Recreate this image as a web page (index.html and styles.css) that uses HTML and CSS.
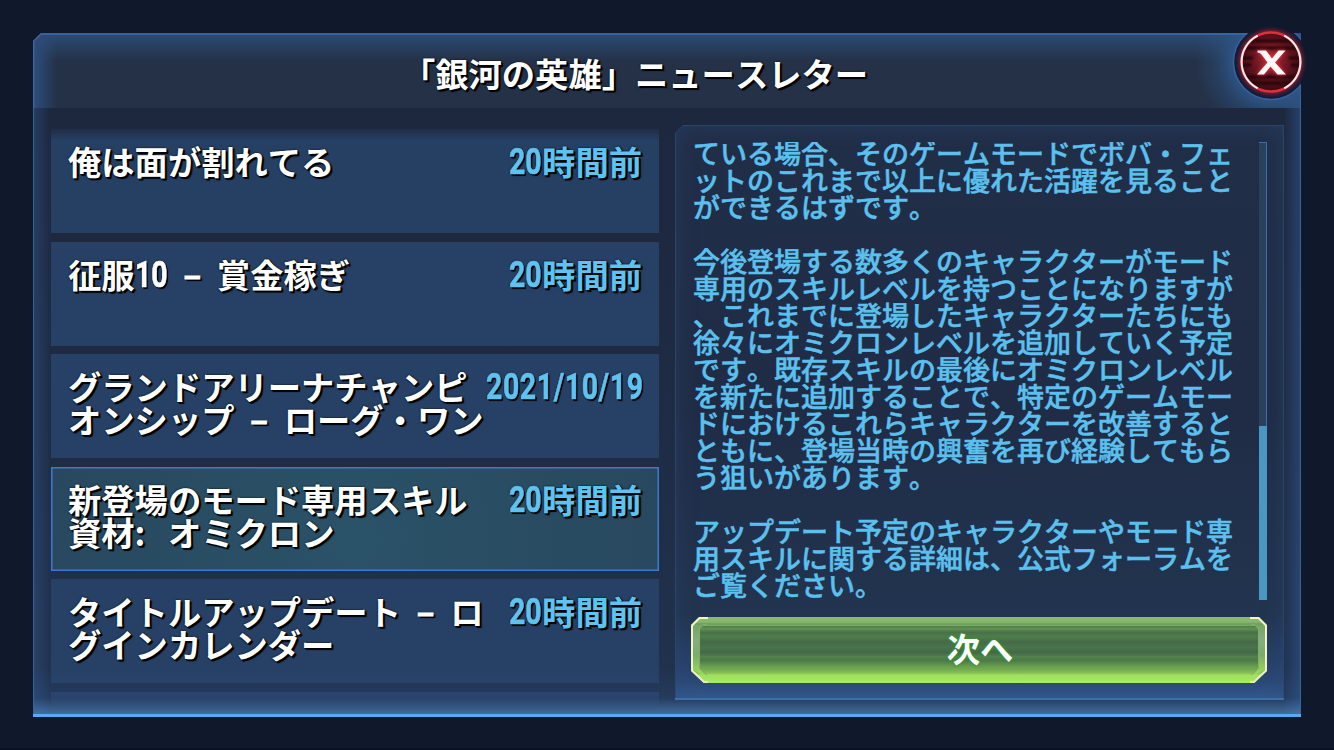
FILE: index.html
```
<!DOCTYPE html>
<html lang="ja">
<head>
    <meta charset="UTF-8">
    <meta name="viewport" content="width=device-width, initial-scale=1.0">
    <title>「銀河の英雄」ニュースレター</title>
    <link rel="stylesheet" href="styles.css">
</head>
<body>
    <div class="panel">
        <header class="panel-header">
            <h1>「銀河の英雄」ニュースレター</h1>
        </header>

        <div class="panel-body">
            <ul class="news-list">
                <li class="news-item">
                    <span class="title">俺は面が割れてる</span>
                    <span class="date"><span class="num">20</span>時間前</span>
                </li>
                <li class="news-item">
                    <span class="title">征服<span class="num">10</span> <span class="dash">–</span> 賞金稼ぎ</span>
                    <span class="date"><span class="num">20</span>時間前</span>
                </li>
                <li class="news-item">
                    <span class="title">グランドアリーナチャンピ<br>オンシップ <span class="dash">–</span> ローグ・ワン</span>
                    <span class="date"><span class="num full">2021/10/19</span></span>
                </li>
                <li class="news-item selected">
                    <span class="title">新登場のモード専用スキル<br>資材<span class="colon">:</span> オミクロン</span>
                    <span class="date"><span class="num">20</span>時間前</span>
                </li>
                <li class="news-item">
                    <span class="title">タイトルアップデート <span class="dash">–</span> ロ<br>グインカレンダー</span>
                    <span class="date"><span class="num">20</span>時間前</span>
                </li>
                <li class="news-item"></li>
            </ul>

            <section class="article">
                <svg class="article-frame" viewBox="0 0 609 575">
                    <path d="M0.5 574V8L8 0.5H608.5V574" fill="none" stroke="#2b4468"/>
                    <path d="M0 574H609" stroke="#3a6ea6" stroke-width="2"/>
                </svg>
                <div class="article-scroll">
                    <p class="article-text">ている場合、そのゲームモードでボバ・フェ<br>ットのこれまで以上に優れた活躍を見ること<br>ができるはずです。<br><br>今後登場する数多くのキャラクターがモード<br>専用のスキルレベルを持つことになりますが<br>、これまでに登場したキャラクターたちにも<br>徐々にオミクロンレベルを追加していく予定<br>です。既存スキルの最後にオミクロンレベル<br>を新たに追加することで、特定のゲームモー<br>ドにおけるこれらキャラクターを改善すると<br>ともに、登場当時の興奮を再び経験してもら<br>う狙いがあります。<br><br>アップデート予定のキャラクターやモード専<br>用スキルに関する詳細は、公式フォーラムを<br>ご覧ください。</p>
                    <div class="scrollbar"><div class="thumb"></div></div>
                </div>
                <button class="next">
                    <svg class="next-bg" viewBox="0 0 576 66">
                        <defs>
                            <linearGradient id="green" x1="0" y1="0" x2="0" y2="1">
                                <stop offset="0" stop-color="#8cba74"/>
                                <stop offset="0.08" stop-color="#86b570"/>
                                <stop offset="0.11" stop-color="#66994f"/>
                                <stop offset="0.125" stop-color="#8ab97a"/>
                                <stop offset="0.14" stop-color="#50804a"/>
                                <stop offset="0.18" stop-color="#619250"/>
                                <stop offset="0.23" stop-color="#49704a"/>
                                <stop offset="0.30" stop-color="#4e7d4b"/>
                                <stop offset="0.38" stop-color="#456a4a"/>
                                <stop offset="0.46" stop-color="#4a744b"/>
                                <stop offset="0.54" stop-color="#446849"/>
                                <stop offset="0.60" stop-color="#52814c"/>
                                <stop offset="0.66" stop-color="#4d7a48"/>
                                <stop offset="0.74" stop-color="#679a4f"/>
                                <stop offset="0.80" stop-color="#75ad50"/>
                                <stop offset="0.85" stop-color="#88c353"/>
                                <stop offset="0.88" stop-color="#a9e25f"/>
                                <stop offset="0.92" stop-color="#a2ea58"/>
                                <stop offset="1" stop-color="#b4f661"/>
                            </linearGradient>
                            <linearGradient id="side" x1="0" y1="0" x2="0" y2="1">
                                <stop offset="0" stop-color="#74a366"/>
                                <stop offset="0.3" stop-color="#86ad81"/>
                                <stop offset="0.6" stop-color="#7cab6a"/>
                                <stop offset="1" stop-color="#9be055"/>
                            </linearGradient>
                        </defs>
                        <path d="M8 0H568L576 8V54L563 66H13L0 54V8Z" fill="url(#green)"/>
                        <path d="M2 9L8 8H13L9 12V52L14 58H12L2 53Z" fill="url(#side)"/>
                        <path d="M574 9L568 8H563L567 12V52L562 58H564L574 53Z" fill="url(#side)"/>
                        <path d="M16 7.500L12 7.500L8.500 11V51.500L16 58" fill="none" stroke="#7fae6b"/>
                        <path d="M560 7.500L564 7.500L567.500 11V51.500L560 58" fill="none" stroke="#7fae6b"/>
                        <path d="M17 1H8.500L1 8.500V53.500L13 65H17M559 1H567.500L575 8.500V53.500L563 65H559" fill="none" stroke="#f3f3c4" stroke-width="2"/>
                    </svg>
                    <span>次へ</span>
                </button>
            </section>
        </div>

        <svg class="panel-frame" viewBox="0 0 1268 684">
            <circle cx="1238" cy="29" r="37.500" fill="#151b33" stroke="#34639f" stroke-width="1.500"/>
            <path d="M0.500 75V8L8 1H1214" fill="none" stroke="#40699f" stroke-width="1.500"/>
            <path d="M0.500 75V684M1267.500 53V684" stroke="#38639a"/>
            <path d="M0 682.500H1268" stroke="#55acee" stroke-width="3"/>
        </svg>
    </div>

    <button class="close" aria-label="閉じる">
        <svg viewBox="0 0 76 76">
            <defs>
                <radialGradient id="red" cx="0.5" cy="0.45" r="0.55">
                    <stop offset="0" stop-color="#b02a35"/>
                    <stop offset="0.5" stop-color="#701722"/>
                    <stop offset="1" stop-color="#3a0a12"/>
                </radialGradient>
                <clipPath id="disc"><circle cx="38" cy="38" r="29"/></clipPath>
            </defs>
            <circle class="glow" cx="38" cy="38" r="30" fill="none" stroke="#c8203a" stroke-width="3"/>
            <circle cx="38" cy="38" r="29" fill="url(#red)"/>
            <g class="bands" clip-path="url(#disc)" stroke="#250409" stroke-width="3">
                <path d="M10 17H66M6 24H70M4 34H20M56 34H72M4 41H18M58 41H72M6 53H70M10 59H66"/>
            </g>
            <circle cx="38" cy="38" r="29.500" fill="none" stroke="#e12f3c" stroke-width="2.500"/>
            <path d="M24.700 11.700A29.500 29.500 0 0 0 24.700 64.300M51.300 11.700A29.500 29.500 0 0 1 51.300 64.300" fill="none" stroke="#fff1ee" stroke-width="2"/>
            <path class="cross" d="M24.500 26.500H33L39 34.500L45.500 26.500H52.500L42 38.500L53 50.500H44.500L37.500 42.500L31 50.500H24L34.500 38.500L28.500 30.500Q27 28.500 24.500 28.500Z" fill="#fffaf7"/>
        </svg>
    </button>
</body>
</html>
```

FILE: styles.css
```
* {
    box-sizing: border-box;
}
body {
    margin: 0;
    padding: 33px;
    width: 1334px;
    height: 750px;
    overflow: hidden;
    position: relative;
    background: linear-gradient(#10192c 748px, #0a1122 748px);
    font-family: "Noto Sans CJK JP", sans-serif;
    color: #fff;
    text-spacing-trim: space-all;
    font-kerning: none;
}
h1, p, ul {
    margin: 0;
    padding: 0;
}
button {
    border: none;
    padding: 0;
    background: none;
    font-family: inherit;
    color: inherit;
    cursor: pointer;
}
.panel {
    position: relative;
    display: flex;
    flex-direction: column;
    width: 1268px;
    height: 684px;
    background: linear-gradient(#1d273d 75px, #1f2c45 420px, #213350 100%);
    clip-path: polygon(0 8px, 8px 0, 100% 0, 100% 100%, 0 100%);
}
.panel::after {
    content: "";
    position: absolute;
    inset: 75px 0 0;
    background:
        linear-gradient(transparent 560px, rgba(60, 110, 170, 0.15) 590px, rgba(82, 137, 196, 0.75) 100%),
        linear-gradient(90deg, rgba(48, 88, 145, 0.45), transparent 18px, transparent 1250px, rgba(48, 88, 145, 0.55));
    pointer-events: none;
}
.panel-header {
    height: 75px;
    padding: 7px 64px 0 0;
    background:
        radial-gradient(circle at 1238px 29px, #2d5587 36px, rgba(45, 85, 135, 0.4) 54px, rgba(45, 85, 135, 0) 76px),
        linear-gradient(#2d4c78, rgba(45, 76, 120, 0) 28px),
        linear-gradient(90deg, #2d4f80, rgba(45, 76, 120, 0) 24px, rgba(45, 76, 120, 0) 1244px, #2d4f80),
        #243147;
    text-align: center;
}
h1 {
    font-size: 33.300px;
    line-height: 66px;
    font-weight: 700;
    white-space: nowrap;
}
h1, .title, .date {
    text-shadow: 0 0 2px #000, 1px 1px 1px #000, 2px 2px 1px #000;
}
.panel-body {
    display: flex;
    gap: 16px;
    height: 609px;
    padding: 17px 17px 0 18px;
}
.news-list {
    display: flex;
    flex-direction: column;
    gap: 8.500px;
    width: 608px;
    padding-top: 4px;
    overflow: hidden;
    list-style: none;
}
.news-item {
    display: flex;
    justify-content: space-between;
    flex: 0 0 104px;
    padding: 15px 17px 0;
    background: #274065;
    font-size: 33.300px;
    line-height: 33.300px;
    font-weight: 700;
    white-space: nowrap;
}
.news-item:first-child {
    background: linear-gradient(#1f2d48, #264064 12px);
}
.news-item:last-child {
    background: linear-gradient(#27406a, #213350 16px);
}
.news-item.selected {
    background: radial-gradient(circle at 50% 70%, #2a5268, #28485f);
    box-shadow: inset 0 0 0 1.500px #3e7acb;
}
.title {
    width: 0;
    word-spacing: 8px;
}
.date {
    color: #5fc3f1;
}
/* condensed digits */
.num {
    display: inline-block;
    width: 33px;
    height: 33px;
    vertical-align: top;
    font-family: Roboto, sans-serif;
    font-size: 36px;
    line-height: 37px;
    transform: scaleX(0.79);
    transform-origin: left;
    word-spacing: 0;
    -webkit-text-stroke: 0.600px currentColor;
}
.full {
    width: 156px;
    line-height: 36px;
    letter-spacing: 0.750px;
}
.dash {
    position: relative;
    top: -1px;
    -webkit-text-stroke: 0.800px currentColor;
}
.colon {
    letter-spacing: 7px;
}
.article {
    position: relative;
    display: flex;
    flex-direction: column;
    width: 609px;
    height: 575px;
    padding: 17px 17px 0 16px;
    background: linear-gradient(#212e48, #202c46 50%, #22344f 85%, #2a4673 97%, #32568a);
    box-shadow: inset 0 0 22px rgba(45, 78, 125, 0.45);
    clip-path: polygon(0 8px, 8px 0, 100% 0, 100% 100%, 0 100%);
}
.article-frame {
    position: absolute;
    inset: 0;
    width: 609px;
    height: 575px;
}
.article-scroll {
    display: flex;
    justify-content: space-between;
    height: 458px;
    overflow: hidden;
}
.article-text {
    margin-top: -3px;
    padding-left: 2px;
    color: #5cc0ee;
    font-size: 27px;
    line-height: 27px;
    font-weight: 500;
    white-space: nowrap;
    -webkit-text-stroke: 0.500px #5cc0ee;
}
.scrollbar {
    display: flex;
    align-items: flex-end;
    width: 8px;
    height: 458px;
    background: #27425a;
    border-top: 1px solid #3c6fb2;
    border-right: 1.500px solid #3c6fb2;
}
.thumb {
    width: 8px;
    flex: none;
    height: 174px;
    background: #4b97c4;
}
.next {
    position: relative;
    width: 576px;
    height: 66px;
    margin-top: 17px;
}
.next-bg {
    position: absolute;
    inset: 0;
    width: 576px;
    height: 66px;
}
.next span {
    position: relative;
    display: block;
    height: 66px;
    padding-left: 2px;
    font-size: 33.300px;
    line-height: 62px;
    font-weight: 700;
    text-shadow: 0 0 3px #2f9a2f, 0 0 3px #2f9a2f;
}
.panel-frame {
    position: absolute;
    inset: 0;
    width: 1268px;
    height: 684px;
    z-index: 1;
    pointer-events: none;
}
.close {
    position: absolute;
    left: 1233px;
    top: 24px;
    width: 76px;
    height: 76px;
}
.close svg {
    display: block;
    overflow: visible;
}
.glow {
    filter: blur(2px);
}
.bands {
    filter: blur(1px);
}
.cross {
    filter: drop-shadow(0 0 2px #ff3040);
}
```
